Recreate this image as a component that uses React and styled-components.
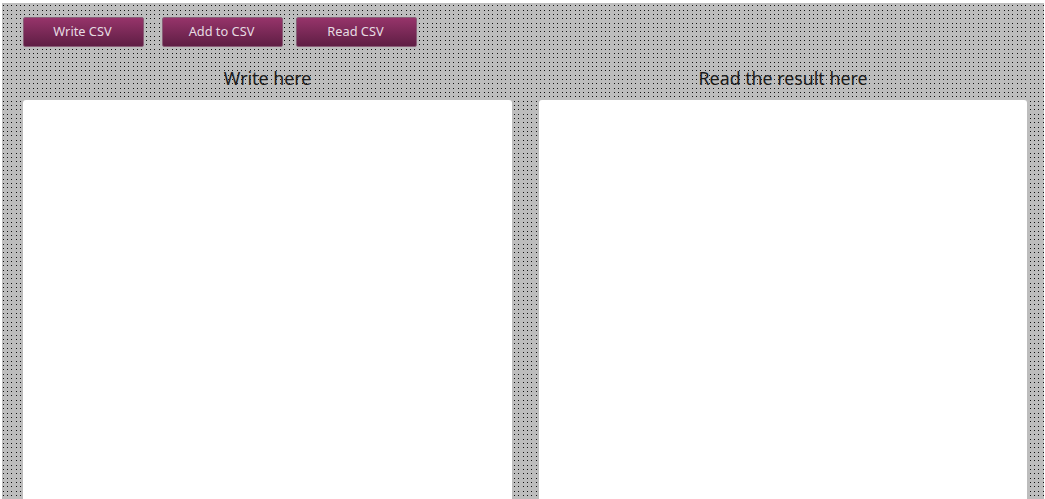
import React from 'react';
import styled, { createGlobalStyle } from 'styled-components';

const GlobalStyle = createGlobalStyle`
  html, body {
    margin: 0;
    height: 100%;
    overflow: hidden;
    background: #fff;
  }
`;

// grey stripes over black leave single pixel dots where the gaps cross
const stripes = (dir, a, b, c) => `linear-gradient(to ${dir},
  #bdbdbd ${a}px, transparent ${a}px, transparent ${a + 1}px,
  #bdbdbd ${a + 1}px, #bdbdbd ${b}px, transparent ${b}px, transparent ${b + 1}px,
  #bdbdbd ${b + 1}px, #bdbdbd ${c}px, transparent ${c}px, transparent ${c + 1}px,
  #bdbdbd ${c + 1}px)`;

const Page = styled.div`
  box-sizing: border-box;
  height: 496px;
  margin: 3px 1px 0 2px;
  padding: 14px 18px 0 21px;
  background-color: #111;
  background-image: ${stripes('right', 1, 5, 9)}, ${stripes('bottom', 2, 7, 11)};
  background-size: 13px 13px;
  font-family: 'Noto Sans', 'Open Sans', sans-serif;
  overflow: hidden;
`;

const Toolbar = styled.div`
  display: flex;
  height: 30px;
`;

const Button = styled.button`
  box-sizing: border-box;
  width: 121px;
  height: 30px;
  margin-right: ${(p) => p.$gap}px;
  padding: 0 2px 2px 0;
  border: 1px solid #8a5f78;
  border-radius: 2px;
  background: linear-gradient(#96346a, #5f1e44);
  color: #e6dce2;
  font-family: inherit;
  font-size: 12.8px;
`;

const Columns = styled.div`
  display: grid;
  grid-template-columns: 489px 488px;
  column-gap: 27px;
  margin-top: 19px;
`;

const Column = styled.section`
  display: flex;
  flex-direction: column;
`;

const Title = styled.div`
  height: 34px;
  line-height: 25px;
  text-align: center;
  font-size: 17.8px;
  color: #1a1a1a;
`;

const Panel = styled.div`
  height: 420px;
  background: #fff;
  border-radius: 3px 3px 0 0;
`;

export default function App() {
  return (
    <>
      <GlobalStyle />
      <Page>
        <Toolbar>
          <Button $gap={18}>Write CSV</Button>
          <Button $gap={13}>Add to CSV</Button>
          <Button $gap={0}>Read CSV</Button>
        </Toolbar>
        <Columns>
          <Column>
            <Title>Write here</Title>
            <Panel />
          </Column>
          <Column>
            <Title>Read the result here</Title>
            <Panel />
          </Column>
        </Columns>
      </Page>
    </>
  );
}
